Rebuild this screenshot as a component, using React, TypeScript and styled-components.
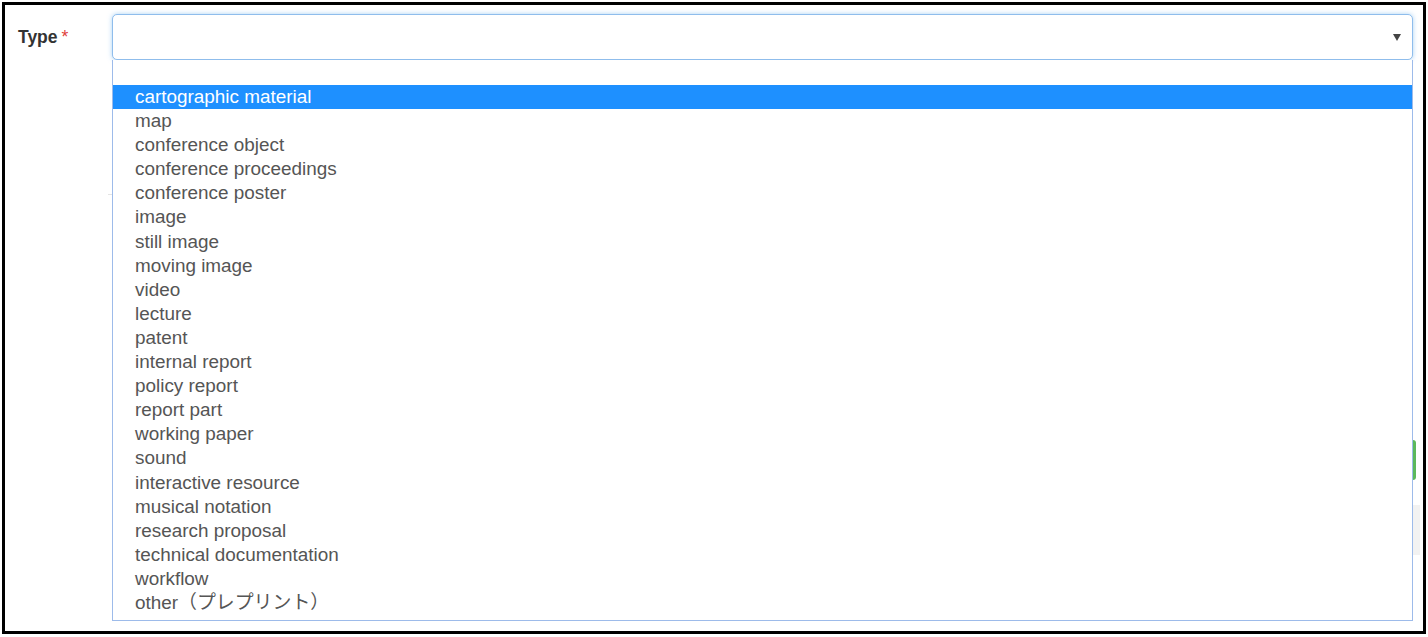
import React from 'react';
import styled, { createGlobalStyle } from 'styled-components';

const GlobalStyle = createGlobalStyle`
  html, body {
    margin: 0;
    padding: 0;
    background: #fff;
  }
  body {
    font-family: 'Liberation Sans', Arial, 'Noto Sans CJK JP', sans-serif;
  }
`;

const Frame = styled.div`
  box-sizing: border-box;
  margin: 2px;
  width: 1424px;
  height: 632px;
  border: 3px solid #000;
  padding: 9px 10px 0 13px;
  overflow: hidden;
`;

const FieldRow = styled.div`
  display: flex;
  align-items: flex-start;
`;

const Label = styled.div`
  width: 94px;
  flex: none;
  padding-top: 13px;
  font-size: 17.5px;
  font-weight: bold;
  color: #333;
`;

const Required = styled.span`
  color: #e0403a;
  font-weight: normal;
  margin-left: 4px;
`;

const SelectWrap = styled.div`
  position: relative;
  flex: 1;
`;

const SelectBox = styled.div`
  box-sizing: border-box;
  height: 46px;
  border: 1px solid #8fbdec;
  border-radius: 5px;
  box-shadow: 0 0 5px rgba(102, 175, 233, 0.55);
  background: #fff;
  display: flex;
  align-items: center;
  justify-content: flex-end;
  padding-right: 11px;
`;

const Arrow = styled.span`
  width: 0;
  height: 0;
  border-left: 4px solid transparent;
  border-right: 4px solid transparent;
  border-top: 7px solid #444;
`;

const Menu = styled.ul`
  position: absolute;
  left: 0;
  right: 0;
  top: 46px;
  margin: 0;
  padding: 0 0 5px;
  list-style: none;
  box-sizing: border-box;
  background: #fff;
  border: 1px solid #9dbbea;
  border-top: none;
  z-index: 2;
`;

const Option = styled.li<{ $active?: boolean; $blank?: boolean }>`
  height: ${(p) => (p.$blank ? '25px' : '24.1px')};
  line-height: 24.1px;
  padding-left: 22px;
  font-size: 18.9px;
  color: ${(p) => (p.$active ? '#fff' : '#555')};
  background: ${(p) => (p.$active ? '#1e90ff' : 'transparent')};
  white-space: nowrap;
`;

const Below = styled.div`
  display: flex;
  flex-direction: column;
  margin-left: 90px;
`;

const Divider = styled.div`
  margin-top: 134px;
  border-top: 1px solid #e4e4e4;
`;

const ActionRow = styled.div`
  display: flex;
  justify-content: flex-end;
  margin-top: 245px;
  margin-right: -3px;
`;

const SaveButton = styled.div`
  width: 80px;
  height: 40px;
  background: #5cb85c;
  border-radius: 3px;
`;

const GreyBox = styled.div`
  align-self: flex-end;
  margin-right: -7px;
  margin-top: 25px;
  width: 60px;
  height: 50px;
  background: #f2f2f2;
`;

const options = [
  'cartographic material',
  'map',
  'conference object',
  'conference proceedings',
  'conference poster',
  'image',
  'still image',
  'moving image',
  'video',
  'lecture',
  'patent',
  'internal report',
  'policy report',
  'report part',
  'working paper',
  'sound',
  'interactive resource',
  'musical notation',
  'research proposal',
  'technical documentation',
  'workflow',
  'other（プレプリント）',
];

export default function App() {
  return (
    <>
      <GlobalStyle />
      <Frame>
        <FieldRow>
          <Label>
            Type<Required>*</Required>
          </Label>
          <SelectWrap>
            <SelectBox>
              <Arrow />
            </SelectBox>
            <Menu>
              <Option $blank>&nbsp;</Option>
              {options.map((o, i) => (
                <Option key={o} $active={i === 0}>
                  {o}
                </Option>
              ))}
            </Menu>
          </SelectWrap>
        </FieldRow>
        <Below>
          <Divider />
          <ActionRow>
            <SaveButton />
          </ActionRow>
          <GreyBox />
        </Below>
      </Frame>
    </>
  );
}
